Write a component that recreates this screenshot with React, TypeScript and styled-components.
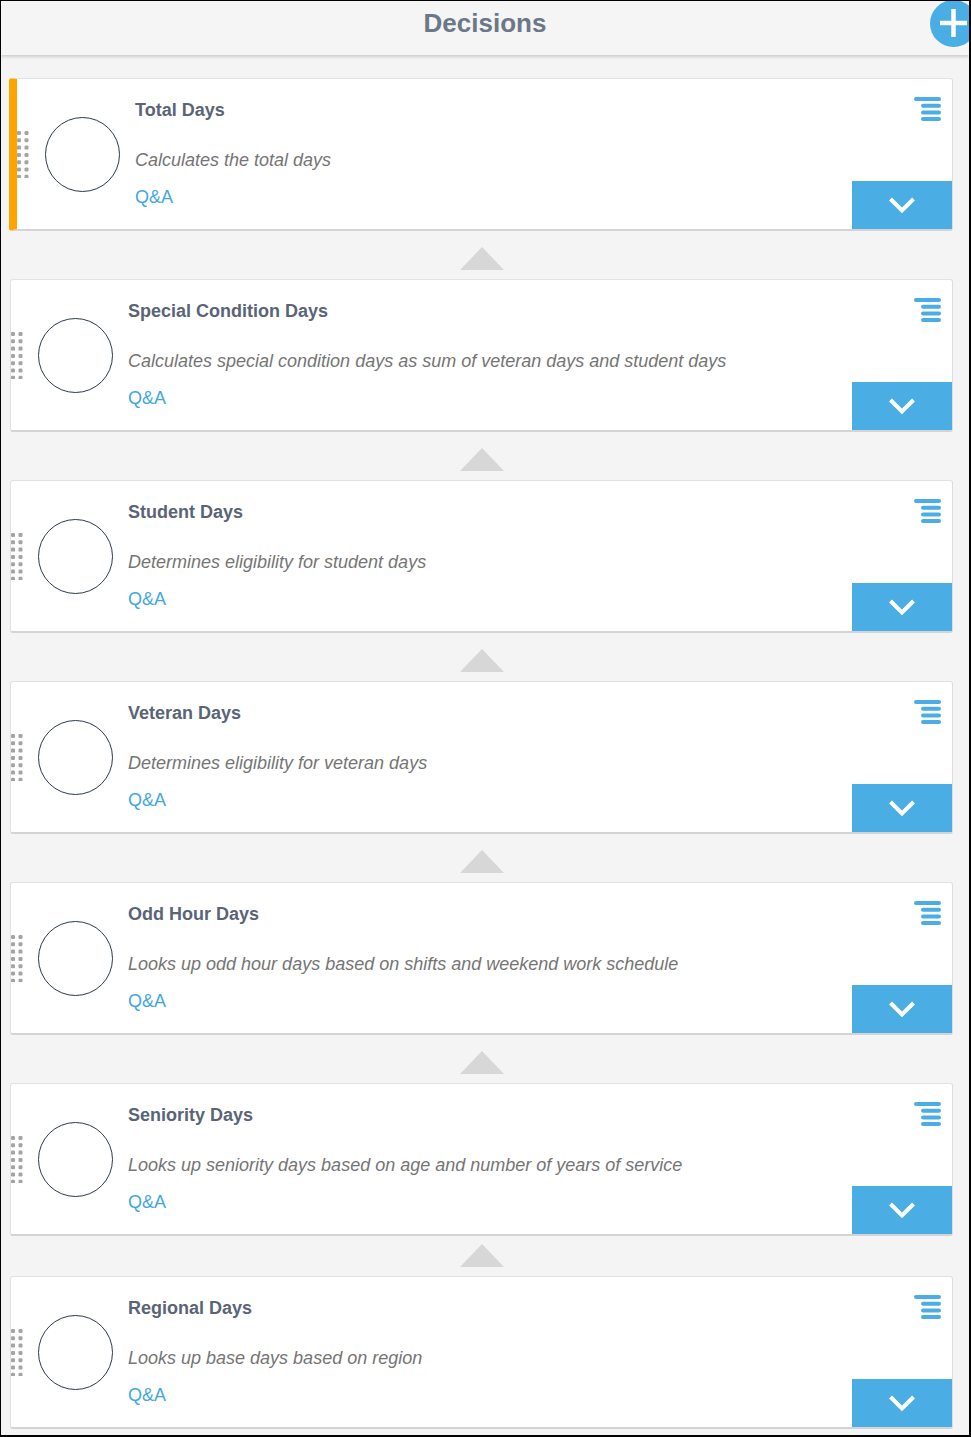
import React from 'react';
import styled, { createGlobalStyle } from 'styled-components';

const GlobalStyle = createGlobalStyle`
	html, body {
		margin: 0;
		padding: 0;
		background: #ffffff;
	}
	* {
		box-sizing: border-box;
	}
`;

const Frame = styled.div`
	width: 971px;
	height: 1437px;
	border-style: solid;
	border-color: #000000;
	border-width: 1px 2px 2px 1px;
	background: #f4f4f4;
	overflow: hidden;
	font-family: 'Liberation Sans', Arial, sans-serif;
`;

const Header = styled.header`
	position: relative;
	height: 54px;
	display: flex;
	justify-content: center;
	align-items: flex-start;
	padding-top: 7px;
	background: #f5f5f5;
	box-shadow: 0px 2px 3px rgba(0, 0, 0, 0.16);
	z-index: 1;
`;

const Title = styled.h1`
	margin: 0;
	font-size: 26px;
	line-height: 30px;
	font-weight: bold;
	color: #6c7787;
`;

const AddButton = styled.div`
	position: absolute;
	top: -1px;
	right: -8px;
	width: 47px;
	height: 47px;
	cursor: pointer;
	& svg {
		display: block;
	}
`;

const List = styled.div`
	display: flex;
	flex-direction: column;
	padding: 23px 16px 0 9px;
`;

const Card = styled.div<{ $active?: boolean }>`
	display: flex;
	align-items: center;
	height: 153px;
	margin-left: ${(p) => (p.$active ? '-1px' : '0')};
	background: #ffffff;
	border-style: solid;
	border-width: 1px 1px 2px 1px;
	border-color: #e2e2e6 #dcdce0 #d3d3d8 #e2e2e6;
	border-left: ${(p) => (p.$active ? '8px solid #ffa500' : '1px solid #e2e2e6')};
	border-radius: 3px;
`;

const Handle = styled.div`
	width: 12px;
	height: 48px;
	flex: none;
	& svg {
		display: block;
	}
`;

const Avatar = styled.div<{ $active?: boolean }>`
	width: 75px;
	height: 75px;
	flex: none;
	margin-left: ${(p) => (p.$active ? '16px' : '15px')};
	border: 1.5px solid #2b3a4c;
	border-radius: 50%;
`;

const Info = styled.div`
	flex: auto;
	align-self: stretch;
	display: flex;
	flex-direction: column;
	padding-top: 20px;
	margin-left: 15px;
	font-size: 18px;
	line-height: 22px;
`;

const CardTitle = styled.div`
	font-weight: bold;
	color: #5a6476;
`;

const CardDescription = styled.div`
	margin-top: 28px;
	font-style: italic;
	color: #757575;
`;

const QaLink = styled.a`
	margin-top: 15px;
	color: #42a7e1;
	text-decoration: none;
	cursor: pointer;
`;

const Actions = styled.div`
	flex: none;
	width: 100px;
	align-self: stretch;
	display: flex;
	flex-direction: column;
	justify-content: space-between;
	align-items: flex-end;
`;

const MenuButton = styled.div`
	margin: 18px 11px 0 0;
	width: 27px;
	height: 25px;
	cursor: pointer;
	& svg {
		display: block;
	}
`;

const ExpandButton = styled.div`
	width: 100px;
	height: 48px;
	display: flex;
	align-items: center;
	justify-content: center;
	background: #4aade3;
	cursor: pointer;
`;

const Connector = styled.div<{ $tight?: boolean }>`
	height: ${(p) => (p.$tight ? '40px' : '48px')};
	display: flex;
	justify-content: center;
	padding-top: ${(p) => (p.$tight ? '8px' : '16px')};
`;

const Arrow = styled.div`
	width: 0;
	height: 0;
	border-left: 22px solid transparent;
	border-right: 22px solid transparent;
	border-bottom: 23px solid #d7d7d7;
`;

const DragDots = () => (
	<svg width="12" height="48" viewBox="0 0 12 48">
		{[0, 1, 2, 3, 4, 5, 6].map((row) =>
			[2, 9.5].map((cx) => (
				<rect
					key={`${row}-${cx}`}
					x={cx - 2}
					y={1 + row * 7.3}
					width="4"
					height="4"
					rx="1.2"
					fill="#a4a4a4"
				/>
			))
		)}
	</svg>
);

const MenuIcon = () => (
	<svg width="27" height="25" viewBox="0 0 27 25">
		<rect x="0" y="0" width="27" height="4" rx="2" fill="#4aade3" />
		<rect x="7" y="6.7" width="20" height="4" rx="2" fill="#4aade3" />
		<rect x="7" y="13.4" width="20" height="4" rx="2" fill="#4aade3" />
		<rect x="7" y="20.1" width="20" height="4" rx="2" fill="#4aade3" />
	</svg>
);

const ChevronDown = () => (
	<svg width="28" height="18" viewBox="0 0 28 18">
		<polyline points="2.5,3 14,14.5 25.5,3" fill="none" stroke="#ffffff" strokeWidth="4" />
	</svg>
);

const PlusIcon = () => (
	<svg width="47" height="47" viewBox="0 0 47 47">
		<circle cx="23.5" cy="23.5" r="23.5" fill="#4aade3" />
		<line x1="10" y1="23" x2="37" y2="23" stroke="#ffffff" strokeWidth="4.5" />
		<line x1="23.5" y1="9" x2="23.5" y2="37" stroke="#ffffff" strokeWidth="4.5" />
	</svg>
);

interface IDecision {
	id: number;
	name: string;
	description: string;
}

const decisions: IDecision[] = [
	{ id: 1, name: 'Total Days', description: 'Calculates the total days' },
	{
		id: 2,
		name: 'Special Condition Days',
		description: 'Calculates special condition days as sum of veteran days and student days',
	},
	{ id: 3, name: 'Student Days', description: 'Determines eligibility for student days' },
	{ id: 4, name: 'Veteran Days', description: 'Determines eligibility for veteran days' },
	{
		id: 5,
		name: 'Odd Hour Days',
		description: 'Looks up odd hour days based on shifts and weekend work schedule',
	},
	{
		id: 6,
		name: 'Seniority Days',
		description: 'Looks up seniority days based on age and number of years of service',
	},
	{ id: 7, name: 'Regional Days', description: 'Looks up base days based on region' },
];

interface DecisionCardProps {
	decision: IDecision;
	active?: boolean;
}

const DecisionCard = ({ decision, active }: DecisionCardProps) => (
	<Card $active={active}>
		<Handle>
			<DragDots />
		</Handle>
		<Avatar $active={active} />
		<Info>
			<CardTitle>{decision.name}</CardTitle>
			<CardDescription>{decision.description}</CardDescription>
			<QaLink>Q&amp;A</QaLink>
		</Info>
		<Actions>
			<MenuButton>
				<MenuIcon />
			</MenuButton>
			<ExpandButton>
				<ChevronDown />
			</ExpandButton>
		</Actions>
	</Card>
);

const App = () => {
	const activeId = 1;

	return (
		<>
			<GlobalStyle />
			<Frame>
				<Header>
					<Title>Decisions</Title>
					<AddButton>
						<PlusIcon />
					</AddButton>
				</Header>
				<List>
					{decisions.map((decision, index) => (
						<React.Fragment key={decision.id}>
							{index > 0 && <Connector $tight={index === decisions.length - 1}><Arrow /></Connector>}
							<DecisionCard decision={decision} active={decision.id === activeId} />
						</React.Fragment>
					))}
				</List>
			</Frame>
		</>
	);
};

export default App;
